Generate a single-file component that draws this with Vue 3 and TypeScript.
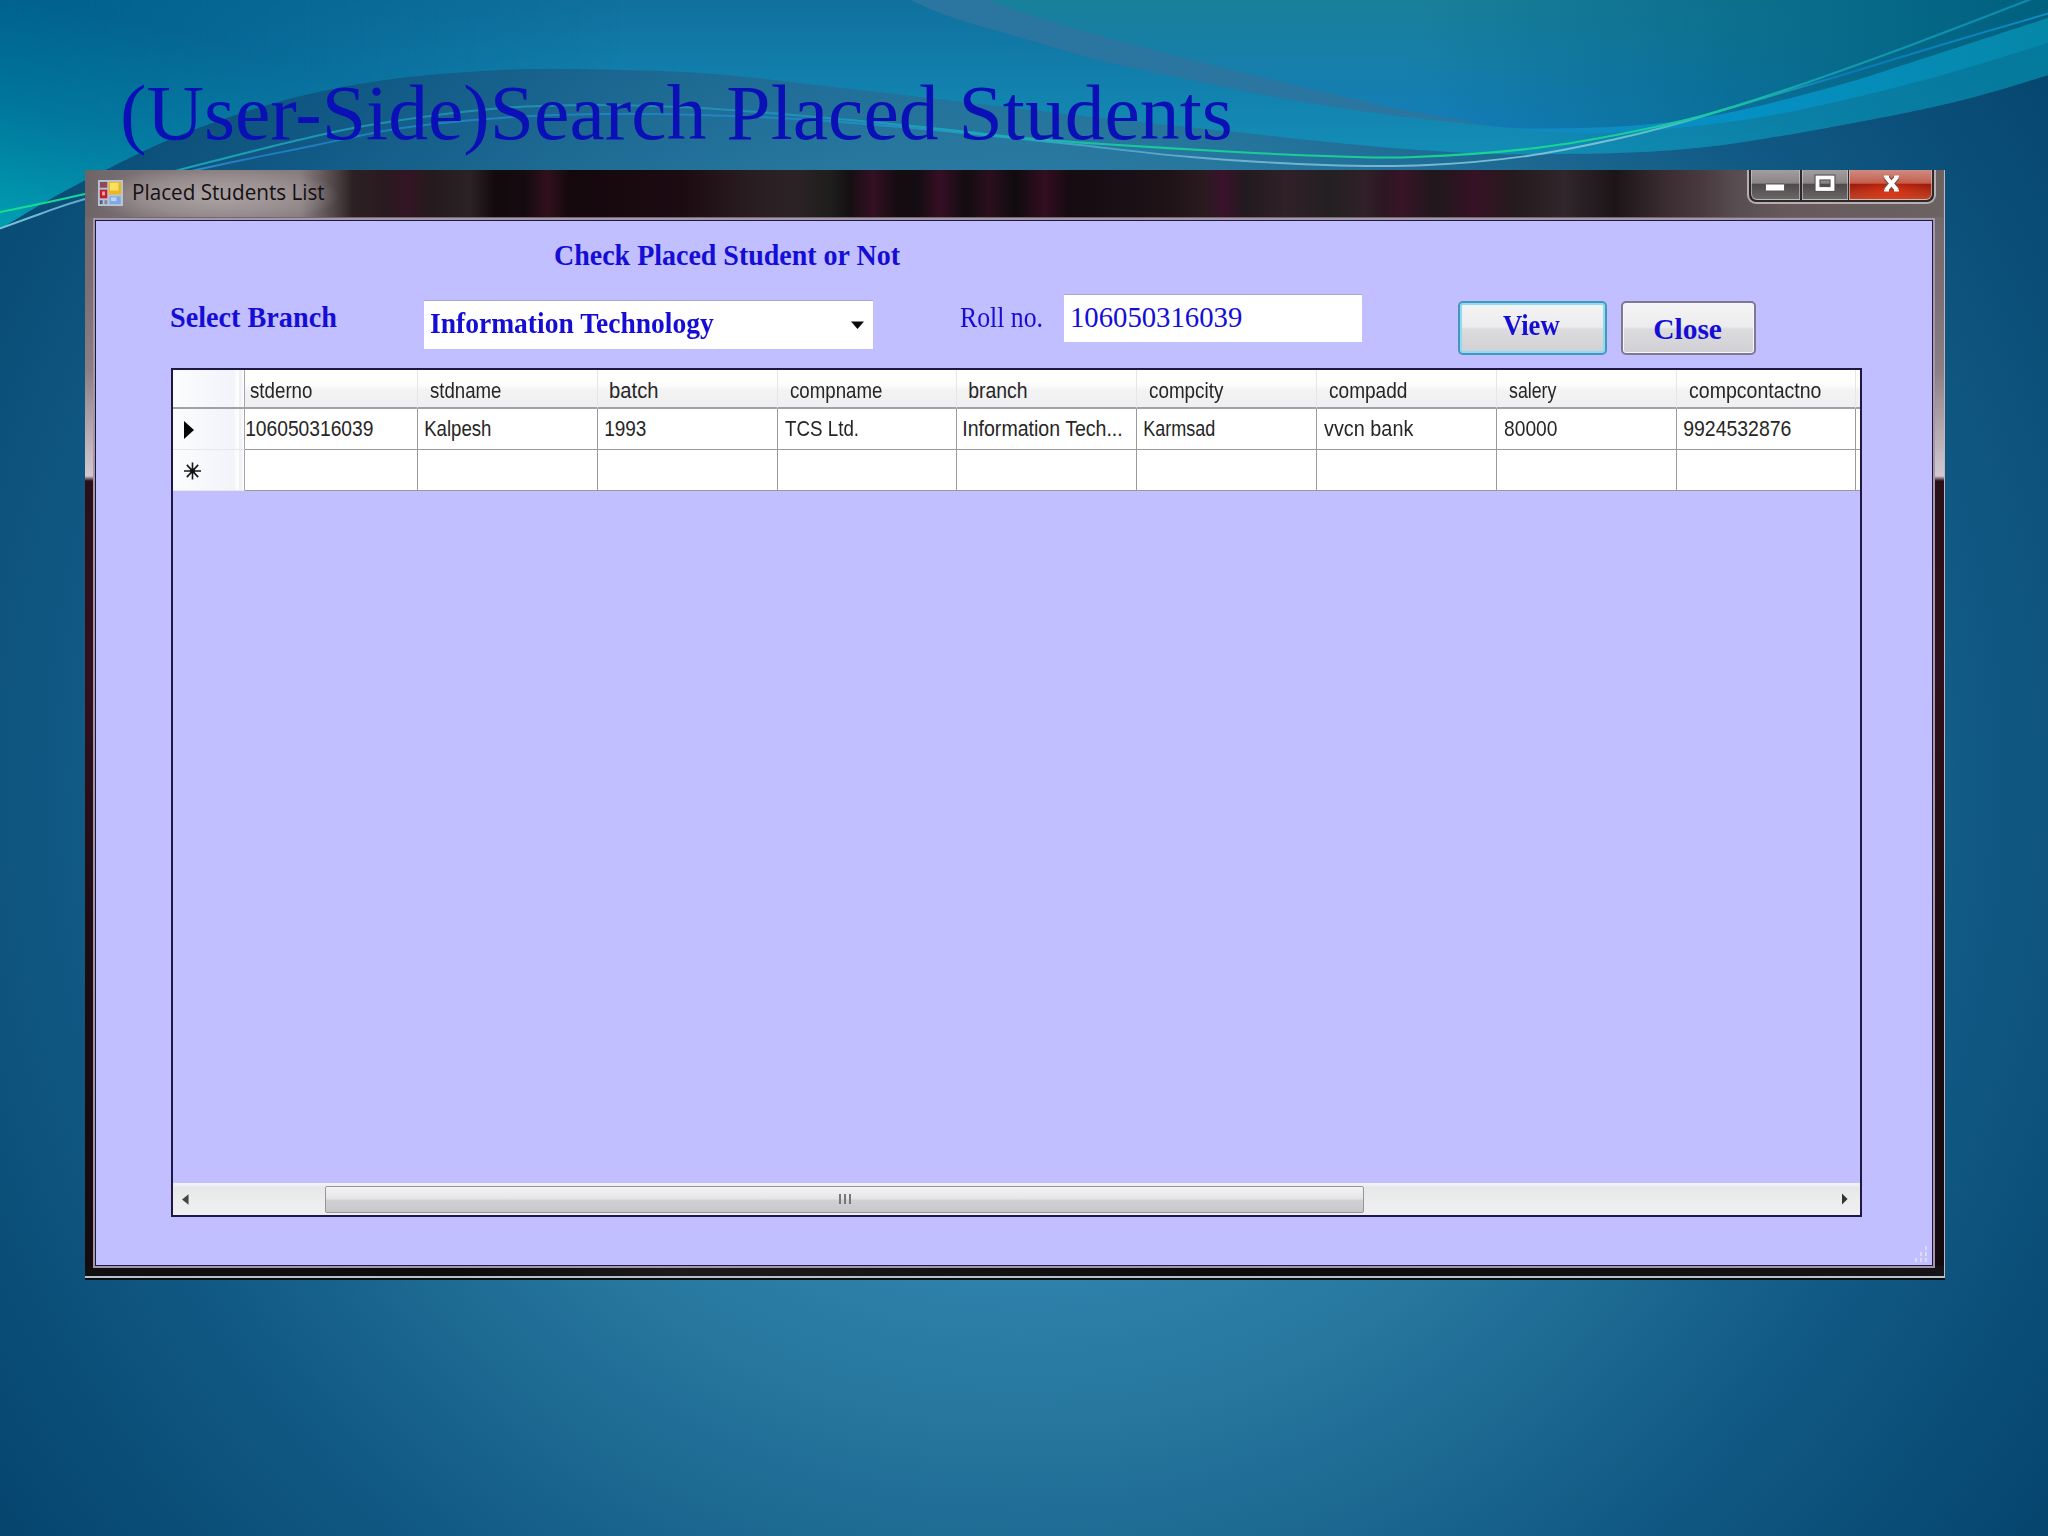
<script setup lang="ts">
import type { Directive } from 'vue'

type Point = [number, number]

interface Column {
  title: string
  titleWidth: number
  value: string
  valueWidth: number
  first?: boolean
}

const columns: Column[] = [
  { title: 'stderno', titleWidth: 62, value: '106050316039', valueWidth: 127, first: true },
  { title: 'stdname', titleWidth: 71, value: 'Kalpesh', valueWidth: 66 },
  { title: 'batch', titleWidth: 48, value: '1993', valueWidth: 41 },
  { title: 'compname', titleWidth: 92, value: 'TCS Ltd.', valueWidth: 73 },
  { title: 'branch', titleWidth: 58, value: 'Information Tech...', valueWidth: 158 },
  { title: 'compcity', titleWidth: 75, value: 'Karmsad', valueWidth: 71 },
  { title: 'compadd', titleWidth: 78, value: 'vvcn bank', valueWidth: 90 },
  { title: 'salery', titleWidth: 48, value: '80000', valueWidth: 53 },
  { title: 'compcontactno', titleWidth: 132, value: '9924532876', valueWidth: 107 },
]

/* Condenses or widens a line of text so that its ink spans the given width. */
const vFit: Directive<HTMLElement, number> = {
  mounted(el, binding) {
    const ctx = document.createElement('canvas').getContext('2d')
    if (!ctx) return
    const cs = getComputedStyle(el)
    ctx.font = `${cs.fontWeight} ${cs.fontSize} ${cs.fontFamily}`
    const m = ctx.measureText((el.textContent ?? '').trim())
    const left = m.actualBoundingBoxLeft
    const scale = binding.value / (left + m.actualBoundingBoxRight)
    el.style.width = `${binding.value}px`
    el.style.transform = `translateX(${left * scale}px) scaleX(${scale})`
  },
}

/* Smooth cubic path through a list of points. */
function curve(p: Point[], start = 'M'): string {
  let d = `${start}${p[0][0]} ${p[0][1]}`
  for (let i = 0; i < p.length - 1; i++) {
    const a = p[Math.max(0, i - 1)]
    const b = p[i]
    const c = p[i + 1]
    const e = p[Math.min(p.length - 1, i + 2)]
    const x1 = b[0] + (c[0] - a[0]) / 6
    const y1 = b[1] + (c[1] - a[1]) / 6
    const x2 = c[0] - (e[0] - b[0]) / 6
    const y2 = c[1] - (e[1] - b[1]) / 6
    d += `C${x1.toFixed(1)} ${y1.toFixed(1)} ${x2.toFixed(1)} ${y2.toFixed(1)} ${c[0]} ${c[1]}`
  }
  return d
}

const crest = curve([
  [0, 229], [50, 199], [107, 169], [170, 139], [232, 116], [300, 96], [384, 80], [482, 71], [558, 69],
  [700, 73], [834, 87], [954, 101], [1102, 118], [1236, 132], [1348, 144], [1468, 153], [1560, 154],
  [1660, 151], [1750, 141], [1884, 117], [1970, 98], [2048, 75],
])
const ribbonOuter = curve([
  [910, 0], [954, 18], [1039, 43], [1102, 61], [1191, 80], [1280, 98], [1348, 109], [1415, 118], [1500, 127],
])
const basin = curve([
  [988, 0], [1039, 18], [1146, 48], [1236, 71], [1325, 92], [1400, 109], [1460, 120], [1500, 127], [1553, 128.5],
  [1640, 125], [1727, 113], [1839, 85], [1928, 57], [2048, 18],
])
const under = curve([
  [1490, 126], [1550, 132], [1600, 133], [1687, 127], [1794, 111], [1928, 79], [2048, 43],
])
const greenLine = curve([
  [-4, 213], [85, 194], [179, 170], [286, 143], [370, 125], [491, 109], [590, 105], [700, 108], [816, 117],
  [932, 128], [1012, 137], [1102, 144], [1236, 152], [1340, 156.5], [1415, 157], [1527, 149], [1616, 135],
  [1705, 115], [1794, 87], [1906, 47], [2034, -2],
])
const whiteLine = curve([
  [-4, 230], [40, 214], [85, 199], [196, 170], [312, 146], [402, 128], [513, 117], [603, 114], [700, 115],
  [812, 120], [923, 129], [1012, 138], [1080, 145], [1191, 157], [1325, 165], [1428, 165], [1527, 156],
  [1616, 139], [1687, 121], [1750, 102], [1839, 76], [1951, 42], [2050, 13],
])
</script>

<template>
  <main class="slide">
    <svg class="waves" viewBox="0 0 2048 260" width="2048" height="260" aria-hidden="true">
      <defs>
        <linearGradient id="sky" x1="0" y1="0" x2="0" y2="1">
          <stop offset="0" stop-color="#10709e" />
          <stop offset=".5" stop-color="#1386b2" />
          <stop offset="1" stop-color="#149cbd" />
        </linearGradient>
        <linearGradient id="skyLeft" gradientUnits="userSpaceOnUse" x1="60" y1="0" x2="0" y2="220">
          <stop offset="0" stop-color="#005f8d" />
          <stop offset=".5" stop-color="#00769b" />
          <stop offset="1" stop-color="#009cb0" />
        </linearGradient>
        <linearGradient id="fadeLeft" x1="0" y1="0" x2="1" y2="0">
          <stop offset="0" stop-color="#fff" />
          <stop offset="1" stop-color="#000" />
        </linearGradient>
        <mask id="leftMask"><rect width="620" height="260" fill="url(#fadeLeft)" /></mask>
        <linearGradient id="skyRight" gradientUnits="userSpaceOnUse" x1="1500" y1="0" x2="2048" y2="0">
          <stop offset="0" stop-color="#047a9c" stop-opacity="0" />
          <stop offset="1" stop-color="#047a9c" />
        </linearGradient>
        <linearGradient id="deep" gradientUnits="userSpaceOnUse" x1="0" y1="0" x2="0" y2="128">
          <stop offset="0" stop-color="#19809b" />
          <stop offset=".45" stop-color="#177fa8" />
          <stop offset="1" stop-color="#147eba" />
        </linearGradient>
        <linearGradient id="deepRight" gradientUnits="userSpaceOnUse" x1="1400" y1="0" x2="2048" y2="0">
          <stop offset="0" stop-color="#00617f" stop-opacity="0" />
          <stop offset="1" stop-color="#00617f" />
        </linearGradient>
        <linearGradient id="underFill" gradientUnits="userSpaceOnUse" x1="1500" y1="0" x2="2048" y2="0">
          <stop offset="0" stop-color="#1489c0" />
          <stop offset=".45" stop-color="#0590c4" />
          <stop offset="1" stop-color="#0587a8" />
        </linearGradient>
        <linearGradient id="greenStroke" gradientUnits="userSpaceOnUse" x1="0" y1="0" x2="2048" y2="0">
          <stop offset="0" stop-color="#12e08c" />
          <stop offset=".05" stop-color="#18d0a0" />
          <stop offset=".09" stop-color="#1ba2b4" />
          <stop offset=".2" stop-color="#208cb4" />
          <stop offset=".38" stop-color="#208eb6" />
          <stop offset=".47" stop-color="#18a8b8" />
          <stop offset=".56" stop-color="#19c99c" />
          <stop offset=".74" stop-color="#18d494" />
          <stop offset=".84" stop-color="#18c9a0" />
          <stop offset=".89" stop-color="#109cb0" />
          <stop offset="1" stop-color="#0d88b0" />
        </linearGradient>
        <linearGradient id="whiteStroke" gradientUnits="userSpaceOnUse" x1="0" y1="0" x2="2048" y2="0">
          <stop offset="0" stop-color="#7cc4d8" />
          <stop offset=".05" stop-color="#58a4cc" />
          <stop offset=".12" stop-color="#1f7cc0" />
          <stop offset=".4" stop-color="#1f86c4" />
          <stop offset=".5" stop-color="#2e9cc4" />
          <stop offset=".6" stop-color="#6fb0cc" />
          <stop offset=".78" stop-color="#7cc0d8" />
          <stop offset=".84" stop-color="#30b8c0" />
          <stop offset=".9" stop-color="#0b78b8" />
          <stop offset="1" stop-color="#0c8cc8" />
        </linearGradient>
      </defs>
      <path :d="crest + 'V0H0Z'" fill="url(#sky)" />
      <path :d="crest + 'V0H0Z'" fill="url(#skyLeft)" mask="url(#leftMask)" />
      <path :d="crest + 'V0H0Z'" fill="url(#skyRight)" />
      <path :d="ribbonOuter + 'L1500 0Z'" fill="#2a76a0" />
      <path :d="under + 'V0H1490Z'" fill="url(#underFill)" />
      <path :d="basin + 'V0Z'" fill="url(#deep)" />
      <path :d="basin + 'V0Z'" fill="url(#deepRight)" />
      <path :d="whiteLine" fill="none" stroke="url(#whiteStroke)" stroke-width="1.9" />
      <path :d="greenLine" fill="none" stroke="url(#greenStroke)" stroke-width="2.1" />
    </svg>

    <h1 class="heading"><span v-fit="1107" class="fit">(User-Side)Search Placed Students</span></h1>

    <section class="window">
      <header class="titlebar">
        <svg class="app-icon" viewBox="0 0 27 27" width="25" height="26" preserveAspectRatio="none">
          <rect width="27" height="27" fill="#b9c3d6" />
          <rect x="2" y="2" width="8" height="6" fill="#8e4a58" />
          <rect x="2" y="10" width="8" height="9" fill="#c4202c" />
          <rect x="4.500" y="12" width="3" height="4" fill="#f0a8a4" />
          <rect x="11.500" y="2" width="13.500" height="13" fill="#e8b820" />
          <rect x="13" y="3" width="9" height="8" fill="#fbe060" />
          <rect x="2" y="21" width="3" height="4" fill="#56607c" />
          <rect x="7" y="21" width="3" height="4" fill="#7c86a0" />
          <rect x="12.500" y="17" width="12" height="8" fill="#7fa8e0" />
          <rect x="14" y="18" width="6" height="4" fill="#b6d2f4" />
        </svg>
        <span v-fit="191" class="fit caption">Placed Students List</span>
        <div class="controls">
          <span class="ctl min">
            <svg viewBox="0 0 48 30" width="48" height="30"><rect x="14.500" y="14" width="19" height="7" rx="1" fill="#fff" stroke="#5a5558" /></svg>
          </span>
          <span class="ctl max">
            <svg viewBox="0 0 48 30" width="48" height="30">
              <rect x="15.500" y="7.500" width="15" height="11.500" fill="none" stroke="#555054" stroke-width="6" />
              <rect x="15.500" y="7.500" width="15" height="11.500" fill="none" stroke="#fff" stroke-width="3.800" />
            </svg>
          </span>
          <span class="ctl shut">
            <svg viewBox="0 0 84 30" width="84" height="30">
              <path d="M37 7L48 20M48 7L37 20" fill="none" stroke="#7d4a48" stroke-width="6.500" />
              <path d="M37 7L48 20M48 7L37 20" fill="none" stroke="#fff" stroke-width="4.200" />
              <path d="M35 6.500h5M45 6.500h5M35 20.500h5M45 20.500h5" stroke="#fff" stroke-width="2" />
            </svg>
          </span>
        </div>
      </header>

      <div class="client">
        <h2 class="subtitle"><span v-fit="346" class="fit">Check Placed Student or Not</span></h2>
        <div class="filters">
          <label class="branch-label"><span v-fit="166" class="fit">Select Branch</span></label>
          <div class="combo">
            <span v-fit="284" class="fit">Information Technology</span>
            <svg viewBox="0 0 13 8" width="13" height="8"><path d="M0 .5H13L6.500 8Z" fill="#0a0a0a" /></svg>
          </div>
          <label class="roll-label"><span v-fit="82" class="fit">Roll no.</span></label>
          <div class="field"><span v-fit="170" class="fit">106050316039</span></div>
          <button class="btn view"><span v-fit="57" class="fit">View</span></button>
          <button class="btn close"><span v-fit="67" class="fit">Close</span></button>
        </div>

        <div class="grid">
          <div class="row head">
            <div class="stub"></div>
            <div v-for="c in columns" :key="c.title" class="cell" :class="{ first: c.first }">
              <span v-fit="c.titleWidth" class="fit">{{ c.title }}</span>
            </div>
            <div class="cell rest"></div>
          </div>
          <div class="row">
            <div class="stub">
              <svg viewBox="0 0 10 18" width="10" height="18"><path d="M0 0L10 9L0 18Z" fill="#050505" /></svg>
            </div>
            <div v-for="c in columns" :key="c.title" class="cell" :class="{ first: c.first }">
              <span v-fit="c.valueWidth" class="fit">{{ c.value }}</span>
            </div>
            <div class="cell rest"></div>
          </div>
          <div class="row">
            <div class="stub">
              <svg viewBox="0 0 18 18" width="17" height="18">
                <path d="M9 0V18M0 9H18M3 2.500L15 15.500M15 2.500L3 15.500" stroke="#181818" stroke-width="1.700" />
                <circle cx="9" cy="9" r="2.600" fill="#101010" />
              </svg>
            </div>
            <div v-for="c in columns" :key="c.title" class="cell" :class="{ first: c.first }"></div>
            <div class="cell rest"></div>
          </div>
          <div class="blank"></div>
          <div class="scroll">
            <svg class="prev" viewBox="0 0 8 12" width="7" height="11"><path d="M7.500 0V12L0 6Z" fill="#444" /></svg>
            <div class="thumb"><i></i><i></i><i></i></div>
            <svg class="next" viewBox="0 0 7 13" width="6" height="12"><path d="M0 0V13L6.500 6.500Z" fill="#333" /></svg>
          </div>
        </div>

        <svg class="grip" viewBox="0 0 16 18" width="16" height="18">
          <g fill="#dcdcf8">
            <rect x="12" y="1" width="2" height="4" /><rect x="12" y="7" width="2" height="4" /><rect x="12" y="13" width="2" height="4" />
            <rect x="7" y="7" width="2" height="4" /><rect x="7" y="13" width="2" height="4" /><rect x="2" y="13" width="2" height="4" />
          </g>
        </svg>
      </div>
    </section>
  </main>
</template>

<style>
body {
  margin: 0;
  background: #0d5680;
}
</style>

<style scoped>
* {
  box-sizing: border-box;
}
.slide {
  position: relative;
  width: 2048px;
  height: 1536px;
  overflow: hidden;
  background: radial-gradient(ellipse 1150px 1160px at 1024px 780px, #3c98c4 0, #378db9 28%, #27779f 55%, #115a85 82%, #04436c 112%);
  font-family: 'Liberation Serif', 'Times New Roman', serif;
}
.waves {
  position: absolute;
  left: 0;
  top: 0;
}
.fit {
  display: inline-block;
  white-space: pre;
  transform-origin: 0 50%;
}
.heading {
  position: relative;
  height: 170px;
  margin: 0;
  padding: 68px 0 0 123px;
  font-size: 79px;
  line-height: 90px;
  font-weight: 400;
  color: #0a10b6;
}
.window {
  position: relative;
  width: 1860px;
  height: 1110px;
  margin-left: 85px;
  padding: 0 11px 15px 11px;
  background:
    linear-gradient(#0c0c0c, #0c0c0c) 0 100% / 100% 2px no-repeat,
    linear-gradient(#b4c4ce, #b4c4ce) 0 1106px / 100% 2px no-repeat,
    linear-gradient(90deg, #bdb9bd, #bdb9bd) 100% 0 / 1.500px 100% no-repeat,
    linear-gradient(90deg, #120f10, #0c0b0c 20%, #1c1a1a 32%, #0c0b0c 60%, #151315) 0 1096px / 100% 11px no-repeat,
    linear-gradient(#6e6567 0, #7c6f73 120px, #8c7f84 200px, #d4c8d0 306px, #2a0f18 311px, #320f1c 500px, #1c0c12 800px, #140a0e 100%);
}
.titlebar {
  display: flex;
  align-items: flex-start;
  height: 47px;
  margin: 0 -9px 0 -11px;
  padding-left: 13px;
  background:
    radial-gradient(ellipse 125px 30px at 130px 26px, rgba(190, 182, 182, .7) 0, rgba(170, 160, 160, .55) 60%, transparent 100%),
    linear-gradient(90deg, #6d6467 0, #7d7376 60px, #887e80 215px, #645a5c 238px, #2c2023 268px, #2a1a20 300px, #331524 322px, #251a1d 345px,
      #2a2225 385px, #120a0d 410px, #150a10 440px, #30101c 462px, #14080d 485px, #1d0b12 600px, #281c20 660px, #2c2225 710px, #1e1e1d 745px,
      #150f12 765px, #341023 788px, #150c10 812px, #130c10 832px, #360f24 855px, #130c10 880px, #2a0f1d 905px, #0f0b0e 930px, #320e20 960px,
      #150b10 985px, #1e1217 1080px, #2a1a20 1120px, #3a122c 1138px, #221a1e 1160px, #302027 1200px, #232022 1245px, #302028 1280px,
      #2c1722 1300px, #381427 1316px, #20171b 1350px, #361224 1390px, #251a1d 1430px, #30262b 1480px, #1c1518 1530px, #3a2c31 1580px,
      #4a3b40 1620px, #574d50 1650px, #66595c 1700px, #6b6262 1858px);
}
.app-icon {
  margin-top: 10px;
}
.caption {
  margin: 7px 0 0 11px;
  font: 400 21.500px/30px 'Open Sans', 'Noto Sans', sans-serif;
  color: #151011;
}
.controls {
  display: flex;
  width: 189px;
  height: 34px;
  margin: 0 7px 0 auto;
  border: solid #b5afb0;
  border-width: 0 2px 2px;
  border-radius: 0 0 9px 9px;
  background: #2d2829;
  padding: 0 2px 2px;
  gap: 1.500px;
}
.ctl {
  height: 30px;
  overflow: hidden;
  border: solid rgba(215, 210, 210, .6);
  border-width: 0 1px 1px;
  background: linear-gradient(#a39d9f 0, #8b8587 45%, #4f4a4c 50%, #6a6567 100%);
}
.ctl svg {
  display: block;
  margin-left: -1px;
}
.min {
  width: 49px;
  border-bottom-left-radius: 6px;
}
.max {
  width: 46px;
}
.shut {
  flex: 1;
  border-bottom-right-radius: 6px;
  background:
    radial-gradient(ellipse 40px 14px at 50% 75%, rgba(255, 60, 20, .5), transparent),
    linear-gradient(#cf8a80 0, #c4614f 45%, #9f1c0c 50%, #c04428 100%);
}
.client {
  position: relative;
  height: 1048px;
  margin: 2px 0 0 -2px;
  border: 2px solid #1c1640;
  outline: 2px solid #a398a8;
  outline-offset: -1px;
  box-shadow: 0 0 0 1px #6e6672;
  background: #c1bfff;
  overflow: hidden;
  color: #150dd6;
  font-size: 28.500px;
  line-height: 32px;
}
.subtitle {
  margin: 19px 0 0 459px;
  height: 32px;
  font-size: inherit;
  font-weight: 700;
}
.filters {
  display: flex;
  align-items: flex-start;
  height: 96px;
  padding-left: 75px;
}
.filters .fit {
  display: block;
}
.branch-label {
  margin-top: 30px;
  font-weight: 700;
}
.combo {
  display: flex;
  justify-content: space-between;
  width: 449px;
  height: 48px;
  margin: 29px 0 0 87px;
  padding: 7px 9px 0 6px;
  background: #fff;
  box-shadow: 0 -1px 0 #a9a7cf;
  font-weight: 700;
}
.combo svg {
  margin-top: 13px;
}
.roll-label {
  margin: 30px 0 0 87px;
}
.field {
  width: 298px;
  height: 47px;
  margin: 23px 0 0 22px;
  padding: 7px 0 0 8px;
  background: #fff;
  box-shadow: 0 -1px 0 #a9a7cf;
}
.btn {
  display: flex;
  align-items: flex-start;
  height: 54px;
  margin: 29px 0 0;
  border: 2px solid #7d7894;
  border-radius: 5px;
  background: linear-gradient(#f4f4f5 0, #ececee 48%, #dcdcdf 52%, #d0d0d4 100%);
  box-shadow: inset 0 0 0 1px #f8f8fb;
  font: inherit;
  font-weight: 700;
  color: inherit;
}
.view {
  width: 149px;
  margin-left: 96px;
  padding: 7px 0 0 43px;
  border-color: #4596bc;
  box-shadow: inset 0 0 0 2px #8fdcf2;
}
.close {
  width: 135px;
  margin-left: 14px;
  padding: 11px 0 0 31px;
}
.grid {
  display: flex;
  flex-direction: column;
  width: 1691px;
  height: 849px;
  margin-left: 75px;
  border: 2px solid #1d1844;
  color: #262626;
  font: 22.500px/24px 'Liberation Sans', Arial, sans-serif;
}
.row {
  display: grid;
  grid-template-columns: 72px 173px repeat(8, 179.800px) minmax(0, 1fr);
  height: 41px;
  background: #fff;
}
.cell {
  height: 41px;
  overflow: hidden;
  padding: 8px 0 0 7px;
  border: solid #9a9a9c;
  border-width: 0 1.500px 1.500px 0;
}
.cell .fit {
  display: block;
}
.cell.first {
  padding-left: 1px;
}
.stub {
  height: 41px;
  padding: 12px 0 0 11px;
  border-right: 1.500px solid #a5a5a8;
  background: linear-gradient(90deg, #fbfcfd, #f3f4fa 85%, #fff 92%, #eceef4 94%, #fff);
}
.stub svg {
  display: block;
}
.row + .row:not(.head) .stub {
  border-bottom: 1px solid #e6e7ec;
}
.head,
.head .cell,
.head .stub {
  height: 39px;
}
.head .cell {
  padding: 9px 0 0 12px;
  border-width: 0 1px 2px 0;
  border-color: #e6e6e8;
  border-bottom-color: #a2a2a4;
  background: linear-gradient(#fff 0, #fdfdfd 40%, #f3f3f4 55%, #efeff1 100%);
}
.head .cell.first {
  padding-left: 5px;
}
.head .stub {
  border-bottom: 2px solid #a2a2a4;
}
.row .cell.rest {
  padding: 0;
  border-right: 0;
}
.blank {
  flex: 1;
}
.scroll {
  display: flex;
  align-items: center;
  height: 32px;
  padding: 0 12px 0 9px;
  background: linear-gradient(#f6f6f8 0, #e6e7ea 14%, #ebedec 50%, #efefef 100%);
}
.thumb {
  display: flex;
  align-items: center;
  justify-content: center;
  gap: 3px;
  width: 1039px;
  height: 27px;
  margin-left: 136px;
  border: 1.500px solid #96969a;
  border-radius: 2px;
  background: linear-gradient(#f3f3f5 0, #e6e6e9 45%, #d0d0d3 55%, #c8c8cb 100%);
}
.thumb i {
  width: 2px;
  height: 10px;
  background: #77777b;
}
.next {
  margin-left: auto;
}
.grip {
  position: absolute;
  right: 3px;
  bottom: 2px;
}
</style>
